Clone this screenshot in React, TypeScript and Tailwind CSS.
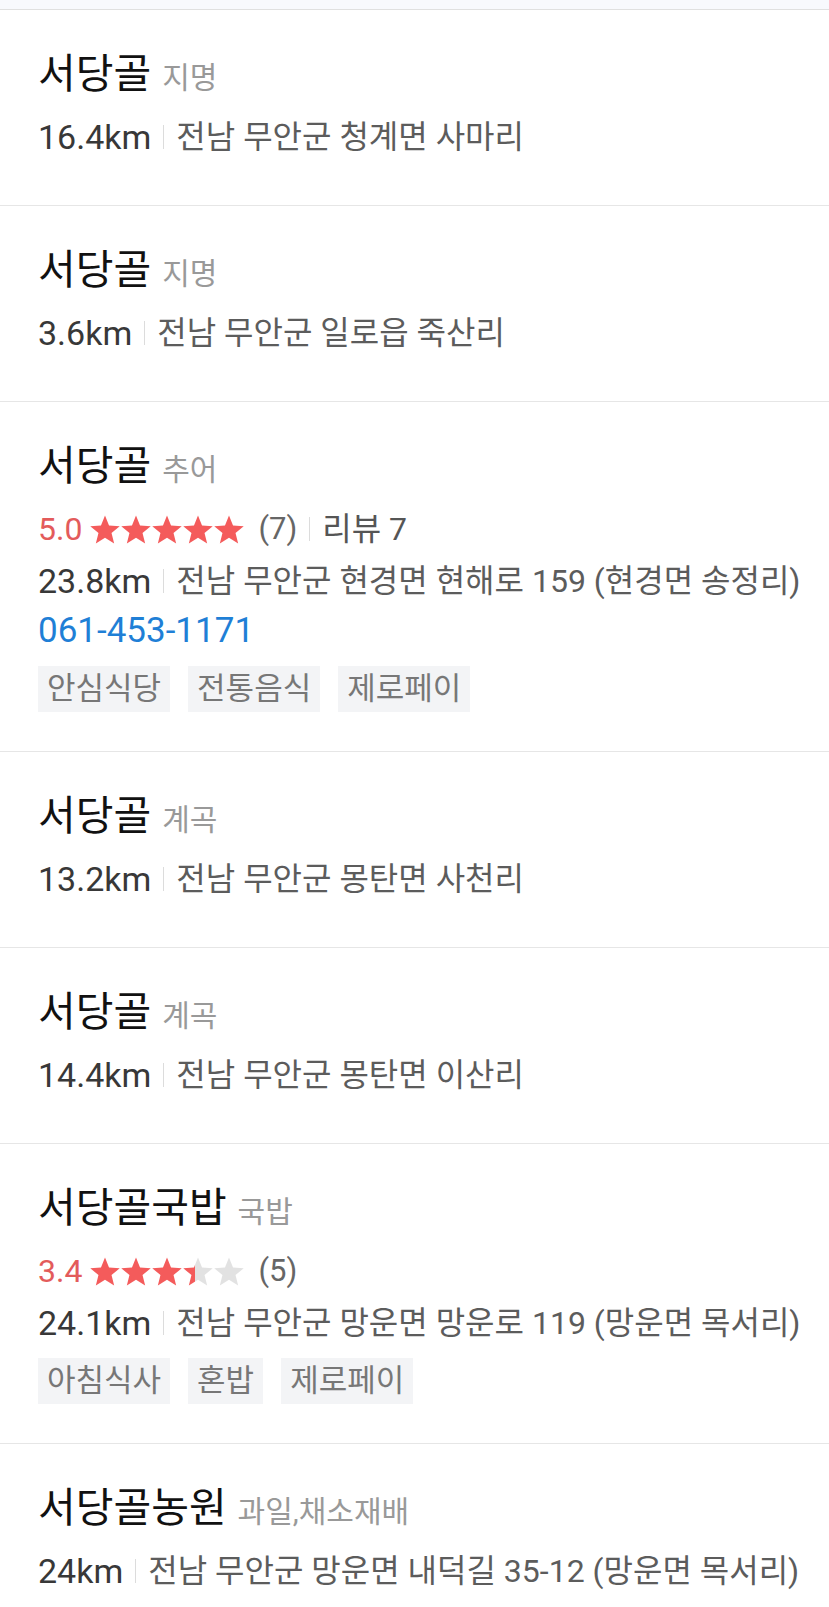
import React from "react";

type Place = {
  name: string;
  category: string;
  distance: string;
  address: string;
  rating?: number;
  count?: number;
  reviews?: number;
  phone?: string;
  tags?: string[];
};

const places: Place[] = [
  { name: "서당골", category: "지명", distance: "16.4km", address: "전남 무안군 청계면 사마리" },
  { name: "서당골", category: "지명", distance: "3.6km", address: "전남 무안군 일로읍 죽산리" },
  {
    name: "서당골",
    category: "추어",
    distance: "23.8km",
    address: "전남 무안군 현경면 현해로 159 (현경면 송정리)",
    rating: 5.0,
    count: 7,
    reviews: 7,
    phone: "061-453-1171",
    tags: ["안심식당", "전통음식", "제로페이"],
  },
  { name: "서당골", category: "계곡", distance: "13.2km", address: "전남 무안군 몽탄면 사천리" },
  { name: "서당골", category: "계곡", distance: "14.4km", address: "전남 무안군 몽탄면 이산리" },
  {
    name: "서당골국밥",
    category: "국밥",
    distance: "24.1km",
    address: "전남 무안군 망운면 망운로 119 (망운면 목서리)",
    rating: 3.4,
    count: 5,
    tags: ["아침식사", "혼밥", "제로페이"],
  },
  { name: "서당골농원", category: "과일,채소재배", distance: "24km", address: "전남 무안군 망운면 내덕길 35-12 (망운면 목서리)" },
];

const font = "font-['Roboto','Noto_Sans_CJK_KR',sans-serif]";

function Star({ fill, id }: { fill: number; id: string }) {
  return (
    <svg width="30" height="29" viewBox="1.2 1.2 21.6 20.8" className="shrink-0">
      <defs>
        <linearGradient id={id} x1="0" x2="1" y1="0" y2="0">
          <stop offset={`${fill * 100}%`} stopColor="#f45b5b" />
          <stop offset={`${fill * 100}%`} stopColor="#e2e2e2" />
        </linearGradient>
      </defs>
      <polygon
        points="12,1.6 14.9,8.7 22.6,9.3 16.7,14.2 18.6,21.7 12,17.6 5.4,21.7 7.3,14.2 1.4,9.3 9.1,8.7"
        fill={`url(#${id})`}
      />
    </svg>
  );
}

function Sep() {
  return <span className="mx-[12px] inline-block h-[24px] w-px shrink-0 bg-[#dcdcdc]" />;
}

function PlaceItem({ p, idx }: { p: Place; idx: number }) {
  return (
    <div className={`border-b border-[#e6e6e6] pl-[38px] pr-2 pt-[42px] ${p.tags ? "pb-[39px]" : "pb-[48px]"}`}>
      {/* title */}
      <div className="flex h-[44px] items-baseline">
        <span className="text-[41px] leading-[44px] text-[#111]">{p.name}</span>
        <span className="ml-[11px] text-[30px] leading-[44px] text-[#999]">{p.category}</span>
      </div>

      {p.rating !== undefined && (
        <div className="mt-[21px] flex h-[40px] items-center">
          <span className="text-[32px] text-[#e35b5b]">{p.rating.toFixed(1)}</span>
          <div className="ml-[8px] flex gap-[1px]">
            {[0, 1, 2, 3, 4].map((i) => (
              <Star key={i} id={`st-${idx}-${i}`} fill={Math.max(0, Math.min(1, p.rating! - i))} />
            ))}
          </div>
          <span className="ml-[14px] text-[31px] text-[#666]">({p.count})</span>
          {p.reviews !== undefined && (
            <>
              <Sep />
              <span className="text-[32px] text-[#555]">리뷰 {p.reviews}</span>
            </>
          )}
        </div>
      )}

      <div className={`${p.rating !== undefined ? "mt-[12px]" : "mt-[21px]"} flex h-[40px] items-center whitespace-nowrap`}>
        <span className="text-[34px] text-[#383838]">{p.distance}</span>
        <Sep />
        <span className="text-[32px] text-[#5c5c5c]">{p.address}</span>
      </div>

      {p.phone && (
        <div className="mt-[10px] flex h-[40px] items-center text-[35px] text-[#1f7fd6]">{p.phone}</div>
      )}

      {p.tags && (
        <div className="mt-[15px] flex gap-[18px]">
          {p.tags.map((t) => (
            <span key={t} className="flex h-[46px] items-center bg-[#f3f4f6] px-[9px] text-[31px] text-[#777]">
              {t}
            </span>
          ))}
        </div>
      )}
    </div>
  );
}

export default function App() {
  return (
    <div className={`${font} min-h-screen w-full bg-white`}>
      <div className="h-[10px] border-b border-[#e0e0e0] bg-[#f8f9fd]" />
      {places.map((p, i) => (
        <PlaceItem key={i} p={p} idx={i} />
      ))}
    </div>
  );
}
